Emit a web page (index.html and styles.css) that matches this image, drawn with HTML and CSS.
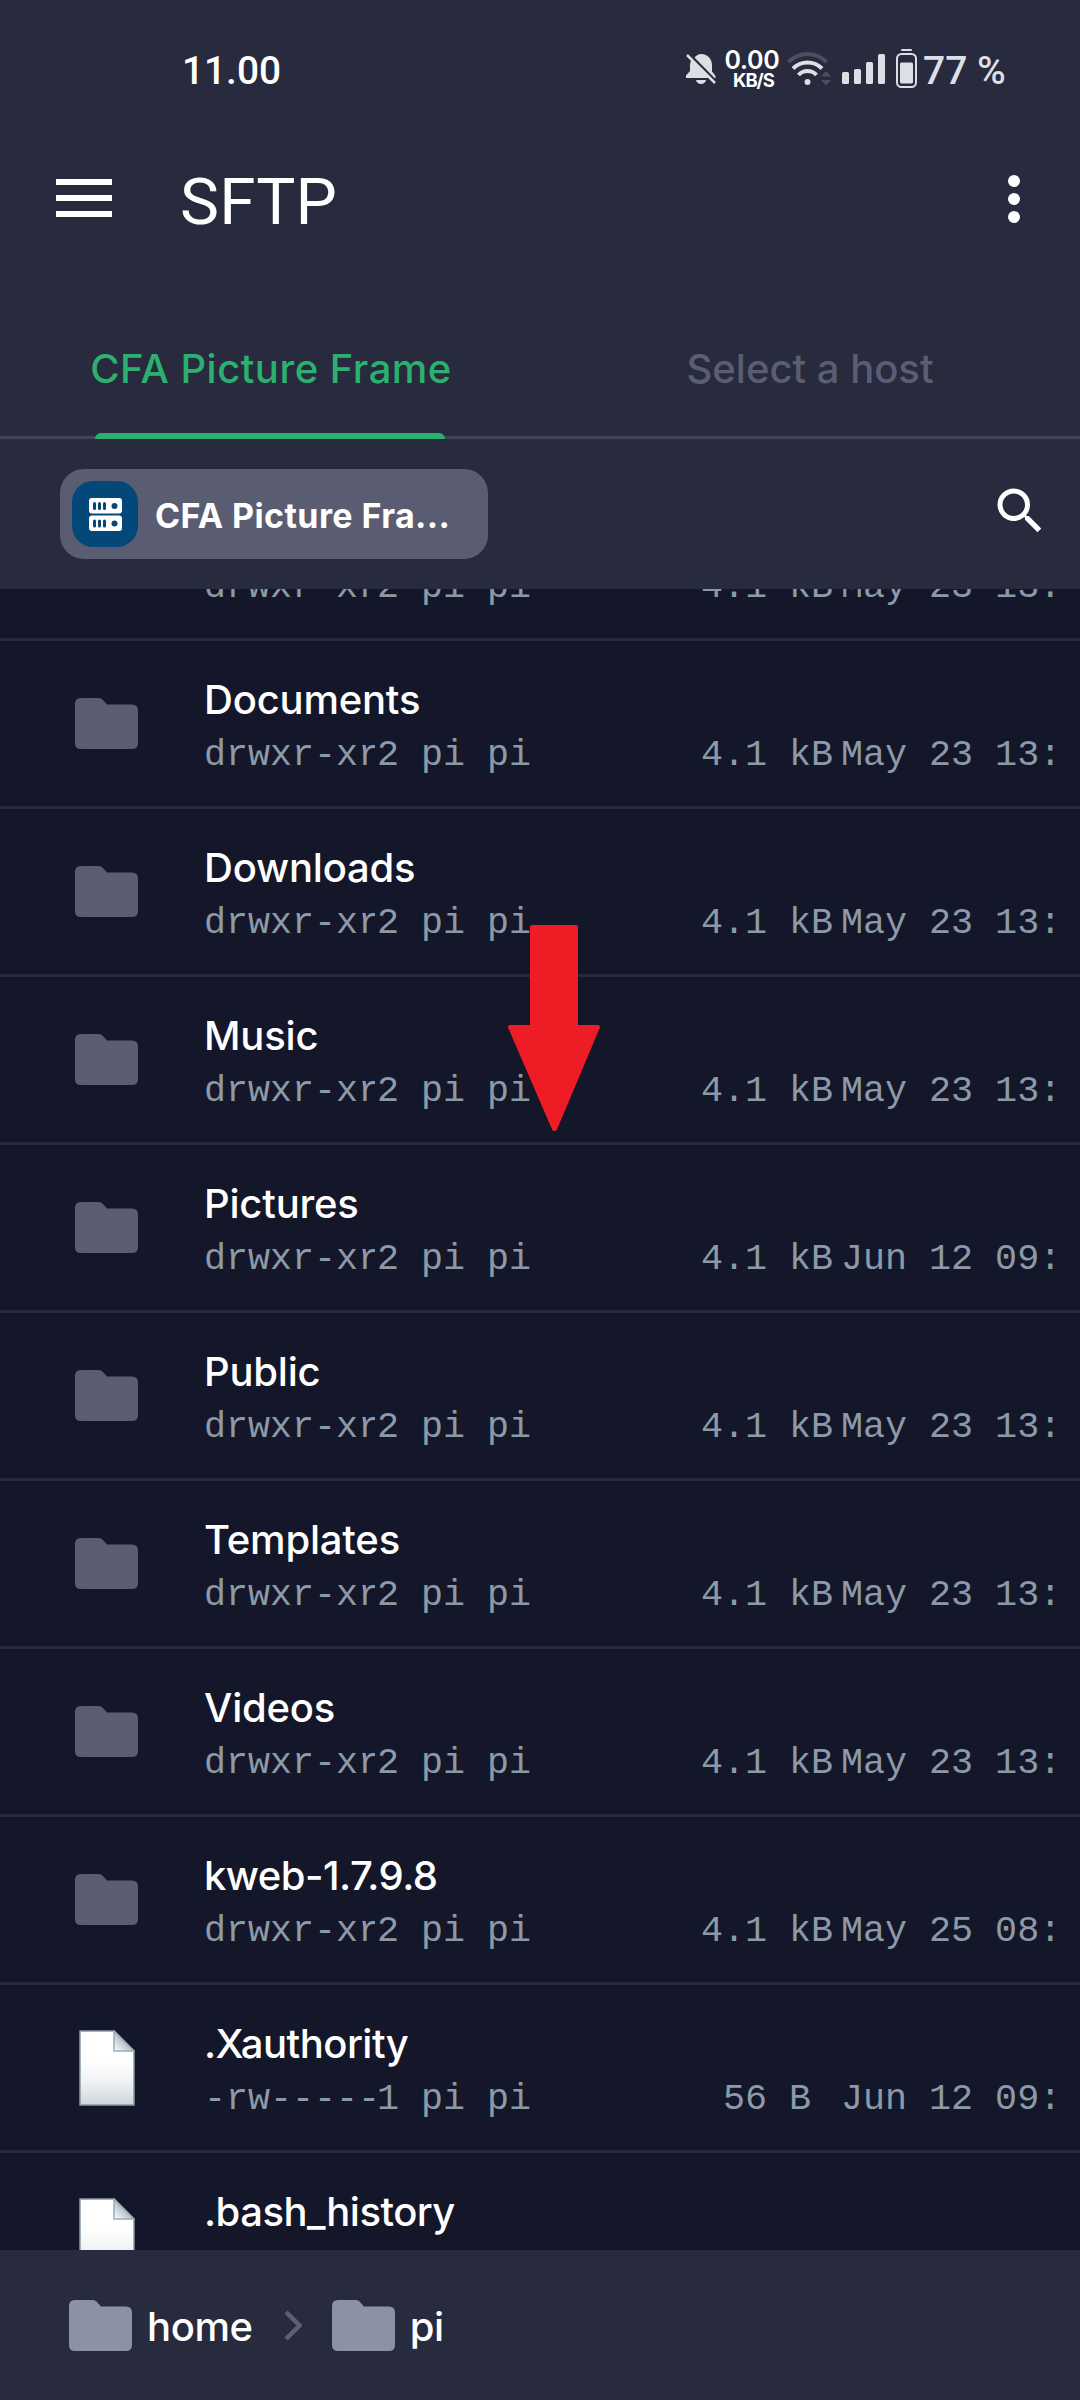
FILE: index.html
```
<!DOCTYPE html>
<html lang="en">
<head>
<meta charset="utf-8">
<title>SFTP</title>
<link rel="stylesheet" href="styles.css">
</head>
<body>
<svg class="defs" aria-hidden="true">
  <defs>
    <linearGradient id="paper" x1="0" y1="0" x2="0" y2="1">
      <stop offset="0.4" stop-color="#ffffff"/>
      <stop offset="0.7" stop-color="#eef1f3"/>
      <stop offset="1" stop-color="#ccd6dc"/>
    </linearGradient>
    <linearGradient id="fold" x1="0" y1="1" x2="0.55" y2="0.45">
      <stop offset="0" stop-color="#ffffff"/>
      <stop offset="1" stop-color="#a9bac4"/>
    </linearGradient>
    <symbol id="folder" viewBox="0 0 63 51">
      <path d="M6 0H24Q26 0 27.500 1.500L32 6.500H57Q63 6.500 63 12.500V45Q63 51 57 51H6Q0 51 0 45V6Q0 0 6 0Z" fill="currentColor"/>
    </symbol>
    <symbol id="file" viewBox="0 0 56 76">
      <path d="M1 1H35L55 21V75H1Z" fill="url(#paper)" stroke="#8699a5" stroke-width="1.500"/>
      <path d="M35 1L55 21H35Z" fill="url(#fold)" stroke="#9aabb5" stroke-width="1.500"/>
    </symbol>
  </defs>
</svg>

<div class="screen">
  <header class="status">
    <span class="clock">11.00</span>
    <svg class="bell" viewBox="0 0 30 30" fill="#dedfe4">
      <path d="M8.500 3.500C10.500 1.500 12.500 0 15 0C21 0 26 4.500 26 11V17.500L29.500 22V24H28.500Z"/>
      <path d="M5.500 6L23.500 24H0V21.500L4 17V11Q4 8 5.500 6Z"/>
      <path d="M10 26H20Q19 30 15 30Q11 30 10 26Z"/>
      <path d="M1 1L29 29" stroke="#dedfe4" stroke-width="2.500"/>
    </svg>
    <span class="speed"><b class="rate">0.00</b><b class="unit">KB/S</b></span>
    <svg class="wifi" viewBox="0 0 44 34" fill="none">
      <path d="M1.500 10Q10 2 20.500 2Q31 2 39.500 10" stroke="#4d4f61" stroke-width="4"/>
      <path d="M6 16.500Q12 10.500 20.500 10.500Q29 10.500 35 16.500" stroke="#dedfe4" stroke-width="4"/>
      <path d="M11.500 23Q15 19 20.500 19Q26 19 29.500 23" stroke="#dedfe4" stroke-width="4"/>
      <circle cx="20.500" cy="30" r="3" fill="#dedfe4"/>
      <path d="M39 19L44 24.500H34ZM34 28H44L39 33.500Z" fill="#4d4f61"/>
    </svg>
    <svg class="signal" viewBox="0 0 43 30" fill="#dedfe4">
      <rect x="0" y="18" width="7" height="12" rx="1.500"/>
      <rect x="12" y="15" width="7" height="15" rx="1.500"/>
      <rect x="24" y="8" width="7" height="22" rx="1.500"/>
      <rect x="36" y="0" width="7" height="30" rx="1.500"/>
    </svg>
    <svg class="battery" viewBox="0 0 21 39">
      <rect x="5" y="0" width="11" height="2" rx="1" fill="#dedfe4"/>
      <rect x="1" y="5" width="19" height="33" rx="4.500" fill="none" stroke="#dedfe4" stroke-width="2"/>
      <rect x="4" y="13.500" width="13" height="21" rx="1.500" fill="#dedfe4"/>
    </svg>
    <span class="percent">77 %</span>
  </header>

  <div class="appbar">
    <svg class="menu" viewBox="0 0 56 38" fill="#fff"><path d="M0 0h56v6H0zM0 16h56v6H0zM0 32h56v6H0z"/></svg>
    <h1 class="title">SFTP</h1>
    <svg class="more" viewBox="0 0 12 48" fill="#fff"><circle cx="6" cy="6" r="6"/><circle cx="6" cy="24" r="6"/><circle cx="6" cy="42" r="6"/></svg>
  </div>

  <nav class="tabs">
    <div class="tab tab-active"><span class="tab-label">CFA Picture Frame</span></div>
    <div class="tab"><span class="tab-label">Select a host</span></div>
  </nav>

  <div class="toolbar">
    <div class="chip">
      <div class="host-icon">
        <svg class="server" viewBox="0 0 33 33">
          <rect width="33" height="15.500" rx="3" fill="#fff"/>
          <rect y="17.500" width="33" height="15.500" rx="3" fill="#fff"/>
          <g fill="#04487a">
            <rect x="4" y="4" width="3" height="8" rx="1.500"/><rect x="9" y="4" width="3" height="8" rx="1.500"/><rect x="14" y="4" width="3" height="8" rx="1.500"/><circle cx="25.500" cy="8" r="3"/>
            <rect x="4" y="21.500" width="3" height="8" rx="1.500"/><rect x="9" y="21.500" width="3" height="8" rx="1.500"/><rect x="14" y="21.500" width="3" height="8" rx="1.500"/><circle cx="25.500" cy="25.500" r="3"/>
          </g>
        </svg>
      </div>
      <span class="chip-label">CFA Picture Fra...</span>
    </div>
    <svg class="search" viewBox="0 0 24 24" fill="#fff"><path d="M15.500 14h-.79l-.28-.27A6.471 6.471 0 0 0 16 9.500 6.500 6.500 0 1 0 9.500 16c1.610 0 3.090-.59 4.230-1.570l.27.28v.79l5 4.990L20.490 19l-4.990-5zm-6 0C7.010 14 5 11.990 5 9.500S7.010 5 9.500 5 14 7.010 14 9.500 11.990 14 9.500 14z"/></svg>
  </div>

  <main class="list">
    <div class="row row-first">
      <div class="meta"><span class="perm">drwxr-xr</span><span class="owner">2 pi pi</span><span class="size">4.1 kB</span><span class="date">May 23 13:</span></div>
    </div>
    <div class="row">
      <svg class="folder"><use href="#folder"/></svg>
      <div class="name">Documents</div>
      <div class="meta"><span class="perm">drwxr-xr</span><span class="owner">2 pi pi</span><span class="size">4.1 kB</span><span class="date">May 23 13:</span></div>
    </div>
    <div class="row">
      <svg class="folder"><use href="#folder"/></svg>
      <div class="name">Downloads</div>
      <div class="meta"><span class="perm">drwxr-xr</span><span class="owner">2 pi pi</span><span class="size">4.1 kB</span><span class="date">May 23 13:</span></div>
    </div>
    <div class="row">
      <svg class="folder"><use href="#folder"/></svg>
      <div class="name">Music</div>
      <div class="meta"><span class="perm">drwxr-xr</span><span class="owner">2 pi pi</span><span class="size">4.1 kB</span><span class="date">May 23 13:</span></div>
    </div>
    <div class="row">
      <svg class="folder"><use href="#folder"/></svg>
      <div class="name">Pictures</div>
      <div class="meta"><span class="perm">drwxr-xr</span><span class="owner">2 pi pi</span><span class="size">4.1 kB</span><span class="date">Jun 12 09:</span></div>
    </div>
    <div class="row">
      <svg class="folder"><use href="#folder"/></svg>
      <div class="name">Public</div>
      <div class="meta"><span class="perm">drwxr-xr</span><span class="owner">2 pi pi</span><span class="size">4.1 kB</span><span class="date">May 23 13:</span></div>
    </div>
    <div class="row">
      <svg class="folder"><use href="#folder"/></svg>
      <div class="name">Templates</div>
      <div class="meta"><span class="perm">drwxr-xr</span><span class="owner">2 pi pi</span><span class="size">4.1 kB</span><span class="date">May 23 13:</span></div>
    </div>
    <div class="row">
      <svg class="folder"><use href="#folder"/></svg>
      <div class="name">Videos</div>
      <div class="meta"><span class="perm">drwxr-xr</span><span class="owner">2 pi pi</span><span class="size">4.1 kB</span><span class="date">May 23 13:</span></div>
    </div>
    <div class="row">
      <svg class="folder"><use href="#folder"/></svg>
      <div class="name name-tight">kweb-1.7.9.8</div>
      <div class="meta"><span class="perm">drwxr-xr</span><span class="owner">2 pi pi</span><span class="size">4.1 kB</span><span class="date">May 25 08:</span></div>
    </div>
    <div class="row">
      <svg class="file"><use href="#file"/></svg>
      <div class="name name-tight">.Xauthority</div>
      <div class="meta"><span class="perm">-rw-----</span><span class="owner">1 pi pi</span><span class="size">56 B </span><span class="date">Jun 12 09:</span></div>
    </div>
    <div class="row">
      <svg class="file"><use href="#file"/></svg>
      <div class="name name-tight">.bash_history</div>
    </div>
    <svg class="arrow" viewBox="0 0 92 206" fill="#ee1c25" stroke="#ee1c25" stroke-width="4" stroke-linejoin="round">
      <path d="M24 2H68V102H90L47 204H46L2 102H24Z"/>
    </svg>
  </main>

  <footer class="path">
    <svg class="crumb-icon"><use href="#folder"/></svg>
    <span class="crumb">home</span>
    <svg class="chevron" viewBox="0 0 18 31"><path d="M2 2L15.500 15.500L2 29" fill="none" stroke="#5d6074" stroke-width="4.500"/></svg>
    <svg class="crumb-icon"><use href="#folder"/></svg>
    <span class="crumb">pi</span>
  </footer>
</div>
</body>
</html>
```
FILE: styles.css
```
* { box-sizing: border-box; }

body {
  margin: 0;
  background: #141729;
  color: #fff;
  font-family: Inter, "Open Sans", sans-serif;
}

svg { display: block; flex: none; }

.defs { position: absolute; width: 0; height: 0; }

.screen {
  width: 1080px;
  height: 2400px;
  display: flex;
  flex-direction: column;
  overflow: hidden;
  background: #282a3d;
}

/* status bar */
.status {
  height: 140px;
  flex: none;
  display: flex;
  align-items: flex-start;
  padding-left: 182px;
  color: #dedfe4;
}
.clock {
  width: 504px;
  padding-top: 48px;
  font: 500 38.800px/46px Roboto, sans-serif;
  color: #fff;
}
.bell { width: 30px; height: 30px; margin-top: 54px; }
.speed {
  width: 60px;
  margin: 48px 0 0 6px;
  display: flex;
  flex-direction: column;
  align-items: center;
  color: #fff;
}
.rate { font: 600 25px/24px Inter, sans-serif; letter-spacing: -0.3px; }
.unit { font: 700 18.500px/16px Inter, sans-serif; letter-spacing: -1px; margin-left: 3px; }
.wifi { width: 44px; height: 34px; margin: 52px 0 0 5px; }
.signal { width: 43px; height: 30px; margin: 54px 0 0 11px; }
.battery { width: 21px; height: 39px; margin: 49px 0 0 11px; }
.percent {
  margin-left: 6px;
  padding-top: 48px;
  font: 500 39px/46px Roboto, sans-serif;
  white-space: nowrap;
}

/* app bar */
.appbar {
  height: 120px;
  flex: none;
  display: flex;
  align-items: center;
  padding: 0 60px 4px 56px;
}
.menu { width: 56px; height: 38px; }
.title {
  flex: 1;
  margin: 7px 0 0 68px;
  font: 400 65.600px/80px Roboto, sans-serif;
  letter-spacing: 0.200px;
}
.more { width: 12px; height: 48px; margin-top: 2px; }

/* tabs */
.tabs {
  height: 179px;
  flex: none;
  display: flex;
  border-bottom: 3px solid #414357;
}
.tab {
  flex: 1;
  height: 179px;
  display: flex;
  flex-direction: column;
  align-items: center;
  justify-content: space-between;
  padding-top: 84px;
  color: #5b5e72;
  font: 500 40px/50px Inter, sans-serif;
  white-space: nowrap;
}
.tab-active { color: #2bb06f; letter-spacing: 0.5px; }
.tab-active .tab-label { padding-left: 2px; }
.tab-active::after {
  content: "";
  width: 350px;
  height: 6px;
  border-radius: 6px 6px 0 0;
  background: #2bb06f;
}

/* host chip and search */
.toolbar {
  height: 150px;
  flex: none;
  display: flex;
  align-items: flex-start;
  justify-content: space-between;
  padding: 30px 30px 0 60px;
}
.chip {
  width: 428px;
  height: 90px;
  display: flex;
  align-items: center;
  padding-left: 12px;
  border-radius: 24px;
  background: #5a5d71;
}
.host-icon {
  width: 66px;
  height: 66px;
  display: flex;
  align-items: center;
  justify-content: center;
  border-radius: 21px;
  background: #04487a;
}
.server { width: 33px; height: 33px; }
.chip-label {
  margin: 3px 0 0 17px;
  font: 700 34px/42px Inter, sans-serif;
  letter-spacing: 0.400px;
  white-space: nowrap;
}
.search { width: 60px; height: 60px; margin-top: 12px; }

/* file list */
.list {
  position: relative;
  height: 1661px;
  flex: none;
  overflow: hidden;
  background: #141729;
}
.row {
  height: 168px;
  display: grid;
  grid-template: 50px 50px / 204px 1fr;
  row-gap: 6px;
  padding-top: 34px;
  border-bottom: 3px solid #272a3d;
}
/* scrolled so that only the lower part of its details shows */
.row-first { margin-top: -116px; }
.row-first .meta { grid-row: 2; }
.folder, .file { grid-row: 1 / 3; }
.folder { width: 63px; height: 51px; margin: 23px 0 0 75px; color: #5a5d71; }
.file { width: 56px; height: 76px; margin: 11px 0 0 79px; }
.name {
  font: 500 40px/50px Inter, sans-serif;
  letter-spacing: -0.200px;
  white-space: nowrap;
}
.name-tight { letter-spacing: -0.520px; }
.meta {
  grid-column: 2;
  display: grid;
  grid-template-columns: 173px 230px 226px 1fr;
  font: 400 36.700px/48px "Liberation Mono", monospace;
  color: #8c9aa7;
  white-space: pre;
}
.perm { width: 171px; overflow: hidden; }
.size { text-align: right; }
.date { padding-left: 8px; }

.arrow { position: absolute; left: 508px; top: 336px; width: 92px; height: 206px; }

/* breadcrumb */
.path {
  flex: 1;
  display: flex;
  align-items: flex-start;
  padding: 50px 0 0 69px;
}
.crumb-icon { width: 63px; height: 51px; color: #8d91a5; }
.crumb {
  margin: 2px 0 0 15px;
  font: 500 40px/50px Inter, sans-serif;
  letter-spacing: -0.400px;
}
.chevron { width: 18px; height: 31px; margin: 10px 30px 0 31px; }
```
